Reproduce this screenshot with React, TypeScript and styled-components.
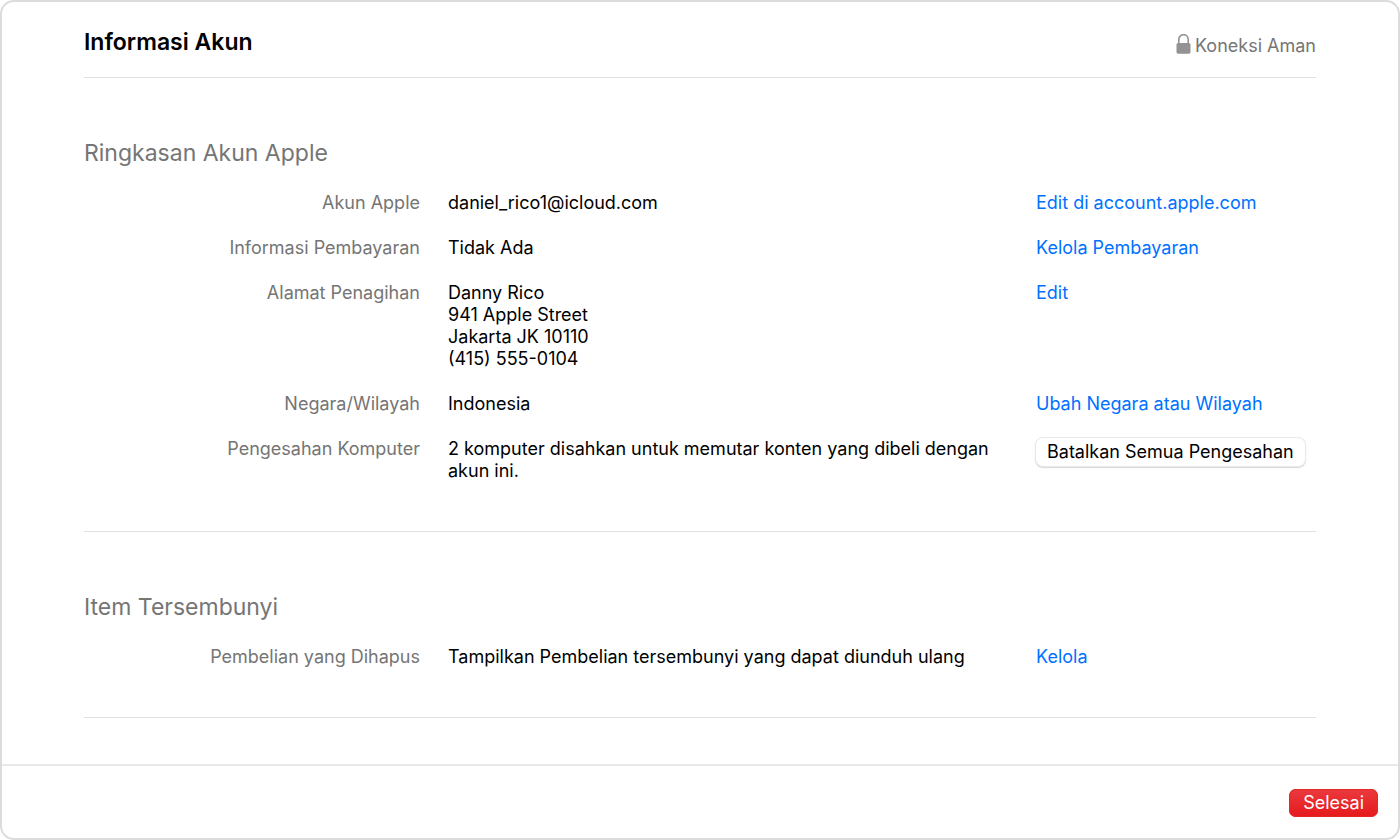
import React from "react";
import styled, { createGlobalStyle } from "styled-components";

const Global = createGlobalStyle`
  * { box-sizing: border-box; }
  body { margin: 0; background: #fff; }
  body, button { font-family: Inter, "Liberation Sans", sans-serif; }
`;

const Sheet = styled.div`
  min-height: 100vh;
  display: flex;
  flex-direction: column;
  border: 2px solid #dcdcdc;
  border-radius: 14px;
  background: #fff;
  color: #000;
  font-size: 18px;
  line-height: 22px;
`;

const Content = styled.main`
  flex: 1;
  padding: 0 82px;
`;

const Header = styled.header`
  display: flex;
  justify-content: space-between;
  align-items: center;
  height: 76px;
  padding-top: 4px;
  border-bottom: 1px solid #e0e0e0;
`;

const Title = styled.h1`
  margin: 0;
  font-size: 23px;
  line-height: 28px;
  font-weight: 600;
`;

const Secure = styled.div`
  display: flex;
  align-items: flex-end;
  gap: 4px;
  padding-top: 8px;
  color: #757575;

  svg {
    margin-bottom: 3px;
  }
`;

const Section = styled.section`
  padding: 61px 0 49px;
  border-bottom: 1px solid #e0e0e0;
`;

const SectionTitle = styled.h2`
  margin: 0 0 25px;
  font-size: 23px;
  line-height: 28px;
  font-weight: 400;
  color: #757575;
`;

const List = styled.dl`
  display: flex;
  flex-direction: column;
  gap: 23px;
  margin: 0;
`;

const Row = styled.div`
  display: grid;
  grid-template-columns: 336px 1fr 280px;
  column-gap: 28px;
`;

const Label = styled.dt`
  text-align: right;
  color: #757575;
`;

const Value = styled.dd`
  margin: 0;
  white-space: pre-line;
`;

const Action = styled.dd`
  margin: 0;
`;

const Link = styled.a`
  color: #0071ff;
  text-decoration: none;
`;

const PlainButton = styled.button`
  display: block;
  height: 28px;
  padding: 0 11px;
  border: 0;
  border-radius: 7px;
  background: #fff;
  box-shadow: 0 0 0 1px #e9e9e9, 0 1px 1px 1px #d8d8d8;
  color: #000;
  font-size: 18px;
  line-height: 22px;
`;

const Footer = styled.footer`
  display: flex;
  justify-content: flex-end;
  align-items: center;
  height: 74px;
  padding: 2px 20px 0;
  border-top: 2px solid #e8e8e8;
`;

const DoneButton = styled.button`
  height: 28px;
  padding: 0 14px;
  border: 0;
  border-radius: 7px;
  background: linear-gradient(#ea3a3f, #e61a1c);
  box-shadow: inset 0 0 0 1px #e5262a;
  color: #fff;
  font-size: 18px;
  line-height: 22px;
`;

const LockIcon = () => (
  <svg width="15" height="20" viewBox="0 0 15 20" aria-hidden="true">
    <rect x="0.5" y="9" width="14" height="10.7" rx="1.6" fill="#939393" />
    <path d="M2.8 9.5V5.4a4.7 4.7 0 0 1 9.4 0V9.5" fill="none" stroke="#939393" strokeWidth="1.6" />
  </svg>
);

type Entry = { label: string; value: string; link?: string; button?: string };

const summary: Entry[] = [
  { label: "Akun Apple", value: "daniel_rico1@icloud.com", link: "Edit di account.apple.com" },
  { label: "Informasi Pembayaran", value: "Tidak Ada", link: "Kelola Pembayaran" },
  { label: "Alamat Penagihan", value: "Danny Rico\n941 Apple Street\nJakarta JK 10110\n(415) 555-0104", link: "Edit" },
  { label: "Negara/Wilayah", value: "Indonesia", link: "Ubah Negara atau Wilayah" },
  { label: "Pengesahan Komputer", value: "2 komputer disahkan untuk memutar konten yang dibeli dengan akun ini.", button: "Batalkan Semua Pengesahan" },
];

const hidden: Entry[] = [
  { label: "Pembelian yang Dihapus", value: "Tampilkan Pembelian tersembunyi yang dapat diunduh ulang", link: "Kelola" },
];

const Group = ({ title, entries }: { title: string; entries: Entry[] }) => (
  <Section>
    <SectionTitle>{title}</SectionTitle>
    <List>
      {entries.map((e) => (
        <Row key={e.label}>
          <Label>{e.label}</Label>
          <Value>{e.value}</Value>
          <Action>
            {e.link && <Link href="#">{e.link}</Link>}
            {e.button && <PlainButton type="button">{e.button}</PlainButton>}
          </Action>
        </Row>
      ))}
    </List>
  </Section>
);

export default function App() {
  return (
    <>
      <Global />
      <Sheet>
        <Content>
          <Header>
            <Title>Informasi Akun</Title>
            <Secure><LockIcon />Koneksi Aman</Secure>
          </Header>
          <Group title="Ringkasan Akun Apple" entries={summary} />
          <Group title="Item Tersembunyi" entries={hidden} />
        </Content>
        <Footer><DoneButton type="button">Selesai</DoneButton></Footer>
      </Sheet>
    </>
  );
}
